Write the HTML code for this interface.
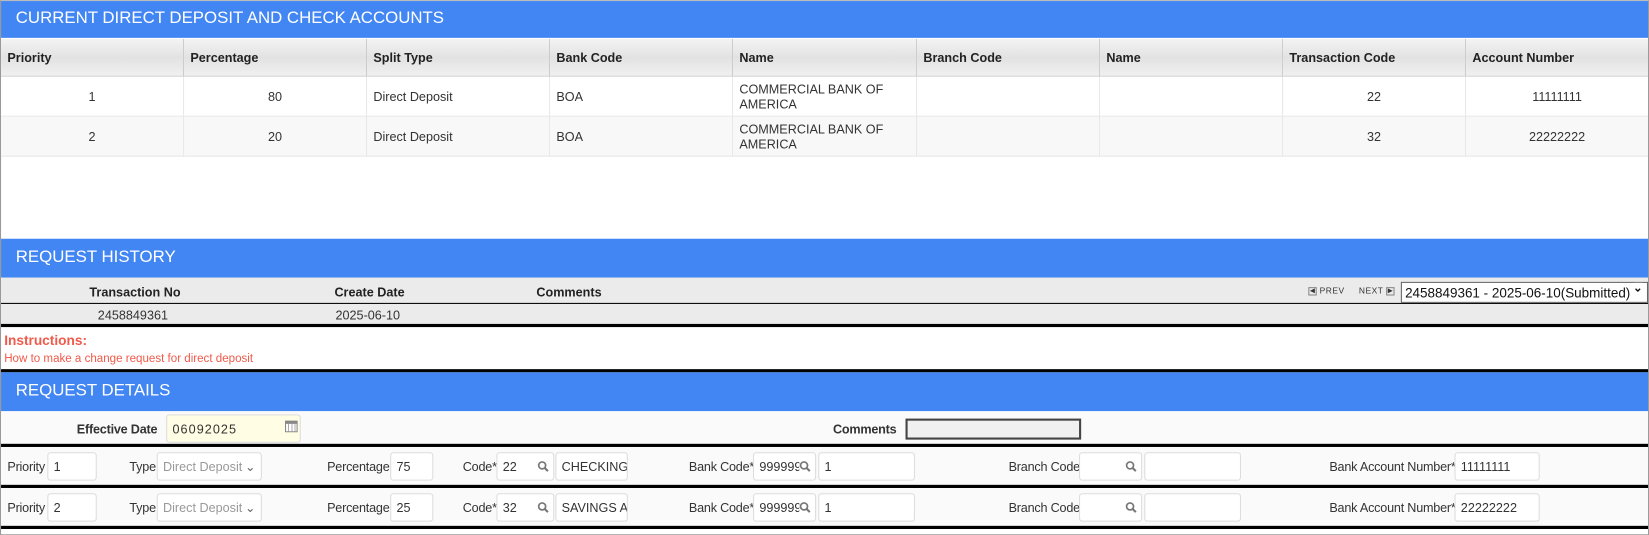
<!DOCTYPE html>
<html><head><style>
*{box-sizing:border-box;margin:0;padding:0}
body{width:1649px;height:535px;background:#fff;font-family:"Liberation Sans",Arial,sans-serif;font-size:12px;color:#333;position:relative;overflow:hidden}
.wrap{position:absolute;left:0;top:0;width:1568px;height:509px;border:1px solid #999;border-top:1px solid #bbb;background:#fff;transform:scale(1.0517);transform-origin:0 0}
.a{position:absolute;white-space:nowrap}
.bar{position:absolute;left:0;width:1566px;background:#4286f4;color:#fff;font-size:16px;padding-left:14px}
.th{position:absolute;top:36px;height:36px;background:linear-gradient(#f4f4f4,#e2e2e2 50%,#f0f0f0);border-right:1px solid #ccc;border-bottom:1px solid #ccc;font-weight:bold;padding:11px 6px;color:#222}
.td{position:absolute;height:38px;border-right:1px solid #e8e8e8;border-bottom:1px solid #e8e8e8;padding:0 6px;display:flex;align-items:center;line-height:14px}
.in{position:absolute;height:27px;border:1px solid #ddd;border-radius:3px;background:#fff;padding:6px 5px;font-size:12px;color:#333;white-space:nowrap;overflow:hidden}
.lbl{position:absolute;font-size:12px;color:#333;white-space:nowrap;letter-spacing:-0.2px}
.blk{position:absolute;left:0;width:1566px;height:3px;background:#000}
.mg{position:absolute;right:4px;top:7px;width:11px;height:11px;background:#fff}
</style></head><body>
<svg width="0" height="0" style="position:absolute"><defs><symbol id="m" viewBox="0 0 11 11"><circle cx="4.5" cy="4.5" r="3.3" fill="none" stroke="#777" stroke-width="1.6"/><line x1="7" y1="7" x2="10" y2="10" stroke="#777" stroke-width="2"/></symbol></defs></svg>
<div class="wrap">
<div class="bar" style="top:0;height:35px;line-height:34px">CURRENT DIRECT DEPOSIT AND CHECK ACCOUNTS</div>
<div class="th" style="left:0;width:174px">Priority</div>
<div class="th" style="left:174px;width:174px">Percentage</div>
<div class="th" style="left:348px;width:174px">Split Type</div>
<div class="th" style="left:522px;width:174px">Bank Code</div>
<div class="th" style="left:696px;width:175px">Name</div>
<div class="th" style="left:871px;width:174px">Branch Code</div>
<div class="th" style="left:1045px;width:174px">Name</div>
<div class="th" style="left:1219px;width:174px">Transaction Code</div>
<div class="th" style="left:1393px;width:173px;border-right:none">Account Number</div>

<div style="position:absolute;top:72px;left:0;width:1566px;height:38px;background:#fff"></div>
<div style="position:absolute;top:110px;left:0;width:1566px;height:38px;background:#f8f8f8"></div>
<div class="td" style="top:72px;left:0;width:174px;justify-content:center">1</div>
<div class="td" style="top:72px;left:174px;width:174px;justify-content:center">80</div>
<div class="td" style="top:72px;left:348px;width:174px">Direct Deposit</div>
<div class="td" style="top:72px;left:522px;width:174px">BOA</div>
<div class="td" style="top:72px;left:696px;width:175px">COMMERCIAL BANK OF<br>AMERICA</div>
<div class="td" style="top:72px;left:871px;width:174px"></div>
<div class="td" style="top:72px;left:1045px;width:174px"></div>
<div class="td" style="top:72px;left:1219px;width:174px;justify-content:center">22</div>
<div class="td" style="top:72px;left:1393px;width:173px;justify-content:center;border-right:none">11111111</div>
<div class="td" style="top:110px;left:0;width:174px;justify-content:center">2</div>
<div class="td" style="top:110px;left:174px;width:174px;justify-content:center">20</div>
<div class="td" style="top:110px;left:348px;width:174px">Direct Deposit</div>
<div class="td" style="top:110px;left:522px;width:174px">BOA</div>
<div class="td" style="top:110px;left:696px;width:175px">COMMERCIAL BANK OF<br>AMERICA</div>
<div class="td" style="top:110px;left:871px;width:174px"></div>
<div class="td" style="top:110px;left:1045px;width:174px"></div>
<div class="td" style="top:110px;left:1219px;width:174px;justify-content:center">32</div>
<div class="td" style="top:110px;left:1393px;width:173px;justify-content:center;border-right:none">22222222</div>

<div class="bar" style="top:226px;height:37px;line-height:36px">REQUEST HISTORY</div>
<div style="position:absolute;top:263px;left:0;width:1566px;height:45px;background:#ebebeb"></div>
<div style="position:absolute;top:287px;left:0;width:1566px;height:1px;background:#000"></div>
<div class="a" style="top:270px;left:84px;font-weight:bold;color:#222">Transaction No</div>
<div class="a" style="top:270px;left:317px;font-weight:bold;color:#222">Create Date</div>
<div class="a" style="top:270px;left:509px;font-weight:bold;color:#222">Comments</div>
<div class="a" style="top:292px;left:92px">2458849361</div>
<div class="a" style="top:292px;left:318px">2025-06-10</div>
<div class="a" style="top:271px;left:1243px;font-size:8px;color:#333;letter-spacing:.5px"><span style="display:inline-block;width:8px;height:8px;border:1px solid #888;font-size:6px;line-height:6px;text-align:center;vertical-align:middle">◀</span> PREV &nbsp;&nbsp;&nbsp; NEXT <span style="display:inline-block;width:8px;height:8px;border:1px solid #888;font-size:6px;line-height:6px;text-align:center;vertical-align:middle">▶</span></div>
<div class="a" style="top:267px;left:1331px;width:235px;height:20px;border:1px solid #666;background:#fff;font-size:12.8px;padding:2px 3px;color:#111;overflow:hidden">2458849361 - 2025-06-10(Submitted)<span style="position:absolute;right:4px;top:-2px;font-size:11px;font-weight:bold;background:#fff">&#8964;</span></div>
<div class="blk" style="top:307px"></div>
<div class="a" style="top:315px;left:3px;font-weight:bold;font-size:13px;color:#f05a4a">Instructions:</div>
<div class="a" style="top:334px;left:3px;font-size:11px;color:#f05a4a">How to make a change request for direct deposit</div>
<div class="blk" style="top:350px"></div>

<div class="bar" style="top:353px;height:37px;line-height:36px">REQUEST DETAILS</div>
<div style="position:absolute;top:390px;left:0;width:1566px;height:110px;background:#fafafa"></div>
<div class="lbl" style="top:400px;left:72px;font-weight:bold">Effective Date</div>
<div class="in" style="top:393px;left:157px;width:128px;background:#fffde3;letter-spacing:1px">06092025</div>
<div class="a" style="top:399px;left:270px;width:12px;height:11px;border:1px solid #888;border-top:3px solid #888;background:repeating-linear-gradient(90deg,#fff 0 2px,#aaa 2px 3px)"></div>
<div class="lbl" style="top:400px;left:791px;font-weight:bold">Comments</div>
<div class="a" style="top:397px;left:860px;width:167px;height:20px;border:2px solid #444;background:#f0f0f0"></div>
<div class="blk" style="top:421px"></div>

<!-- row 1 -->
<div class="lbl" style="top:436px;left:6px">Priority</div>
<div class="in" style="top:429px;left:44px;width:47px">1</div>
<div class="lbl" style="top:436px;left:122px">Type</div>
<div class="in" style="top:429px;left:148px;width:100px;color:#999">Direct Deposit <span style="position:absolute;right:5px;color:#666">&#8964;</span></div>
<div class="lbl" style="top:436px;left:310px">Percentage</div>
<div class="in" style="top:429px;left:370px;width:41px">75</div>
<div class="lbl" style="top:436px;left:439px">Code*</div>
<div class="in" style="top:429px;left:471px;width:55px">22<svg class="mg"><use href="#m"/></svg></div>
<div class="in" style="top:429px;left:527px;width:69px">CHECKING</div>
<div class="lbl" style="top:436px;left:654px">Bank Code*</div>
<div class="in" style="top:429px;left:715px;width:60px">999999<svg class="mg"><use href="#m"/></svg></div>
<div class="in" style="top:429px;left:777px;width:92px">1</div>
<div class="lbl" style="top:436px;left:958px">Branch Code</div>
<div class="in" style="top:429px;left:1025px;width:60px"><svg class="mg"><use href="#m"/></svg></div>
<div class="in" style="top:429px;left:1087px;width:92px"></div>
<div class="lbl" style="top:436px;left:1263px">Bank Account Number*</div>
<div class="in" style="top:429px;left:1382px;width:81px">11111111</div>
<div class="blk" style="top:460px"></div>

<!-- row 2 -->
<div class="lbl" style="top:475px;left:6px">Priority</div>
<div class="in" style="top:468px;left:44px;width:47px">2</div>
<div class="lbl" style="top:475px;left:122px">Type</div>
<div class="in" style="top:468px;left:148px;width:100px;color:#999">Direct Deposit <span style="position:absolute;right:5px;color:#666">&#8964;</span></div>
<div class="lbl" style="top:475px;left:310px">Percentage</div>
<div class="in" style="top:468px;left:370px;width:41px">25</div>
<div class="lbl" style="top:475px;left:439px">Code*</div>
<div class="in" style="top:468px;left:471px;width:55px">32<svg class="mg"><use href="#m"/></svg></div>
<div class="in" style="top:468px;left:527px;width:69px">SAVINGS A</div>
<div class="lbl" style="top:475px;left:654px">Bank Code*</div>
<div class="in" style="top:468px;left:715px;width:60px">999999<svg class="mg"><use href="#m"/></svg></div>
<div class="in" style="top:468px;left:777px;width:92px">1</div>
<div class="lbl" style="top:475px;left:958px">Branch Code</div>
<div class="in" style="top:468px;left:1025px;width:60px"><svg class="mg"><use href="#m"/></svg></div>
<div class="in" style="top:468px;left:1087px;width:92px"></div>
<div class="lbl" style="top:475px;left:1263px">Bank Account Number*</div>
<div class="in" style="top:468px;left:1382px;width:81px">22222222</div>
<div class="blk" style="top:499px"></div>
</div>
</body></html>
